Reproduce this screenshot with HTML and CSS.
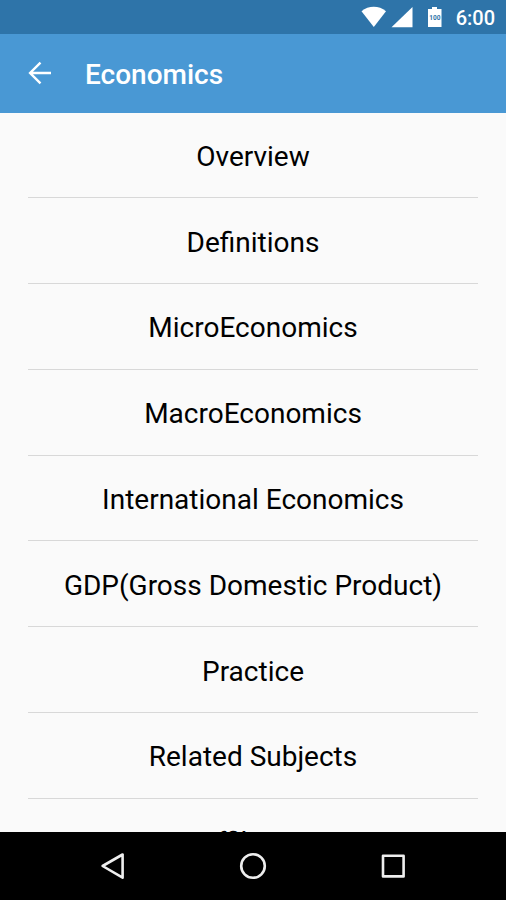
FILE: index.html
```html
<!DOCTYPE html>
<html lang="en">
<head>
<meta charset="utf-8">
<title>Economics</title>
<link rel="stylesheet" href="styles.css">
</head>
<body>
<div class="screen">
  <header class="status">
    <svg class="signals" width="86" height="34" viewBox="0 0 86 34" fill="#fff">
      <path d="M1.5 11.2C8.5 5.4 19 5.4 26 11.2L13.8 27Z"/>
      <path d="M52.5 7v20.3H31.5Z"/>
      <path d="M72 7h5v2h4.5v18H68V9h4Z"/>
      <text x="74.8" y="19.5" class="level">100</text>
    </svg>
    <span class="clock">6:00</span>
  </header>
  <div class="toolbar">
    <svg class="back" width="24" height="24" viewBox="0 0 24 24" fill="none" stroke="#fff" stroke-width="2.4"><path d="M23 12H2.5M12.5 1.6L2.1 12l10.4 10.4"/></svg>
    <h1 class="title">Economics</h1>
  </div>
  <main class="list">
    <div class="row">Overview</div>
    <div class="row">Definitions</div>
    <div class="row">MicroEconomics</div>
    <div class="row">MacroEconomics</div>
    <div class="row">International Economics</div>
    <div class="row">GDP(Gross Domestic Product)</div>
    <div class="row">Practice</div>
    <div class="row">Related Subjects</div>
    <div class="row">Affiliates</div>
  </main>
  <nav class="navbar">
    <svg width="506" height="68" viewBox="0 0 506 68" fill="none" stroke="#eee" stroke-width="2.6" stroke-linejoin="round">
      <path d="M122.6 22.5v23.2L102.6 34Z"/>
      <circle cx="253" cy="34" r="11.8"/>
      <path d="M383 23.8h20.6v20.6H383Z"/>
    </svg>
  </nav>
</div>
</body>
</html>
```
FILE: styles.css
```css
* { box-sizing: border-box; }
body { margin: 0; font-family: Roboto, sans-serif; }
.screen { width: 506px; height: 900px; display: flex; flex-direction: column; overflow: hidden; background: #fafafa; }
.status { height: 34px; flex: none; background: #2e74a9; display: flex; align-items: center; justify-content: flex-end; padding-right: 11px; color: #fff; }
.signals { margin-right: 10px; }
.level { font: 700 6.5px Roboto, sans-serif; fill: #2e74a9; text-anchor: middle; }
.clock { font-size: 20px; font-weight: 500; line-height: 34px; padding-top: 2px; }
.toolbar { height: 78.5px; flex: none; background: #4998d4; display: flex; align-items: center; padding-left: 28px; }
.title { margin: 3px 0 0 33px; color: #fff; font-size: 28px; font-weight: 500; line-height: 34px; }
.list { flex: 1; min-height: 0; overflow: hidden; padding: 0 28px; }
.row { height: 85.8px; border-bottom: 1px solid #d8d8d8; display: flex; align-items: center; justify-content: center; padding-top: 3px; font-size: 28px; color: #000; white-space: nowrap; }
.navbar { height: 68px; flex: none; background: #000; }
.navbar svg { display: block; }
```
